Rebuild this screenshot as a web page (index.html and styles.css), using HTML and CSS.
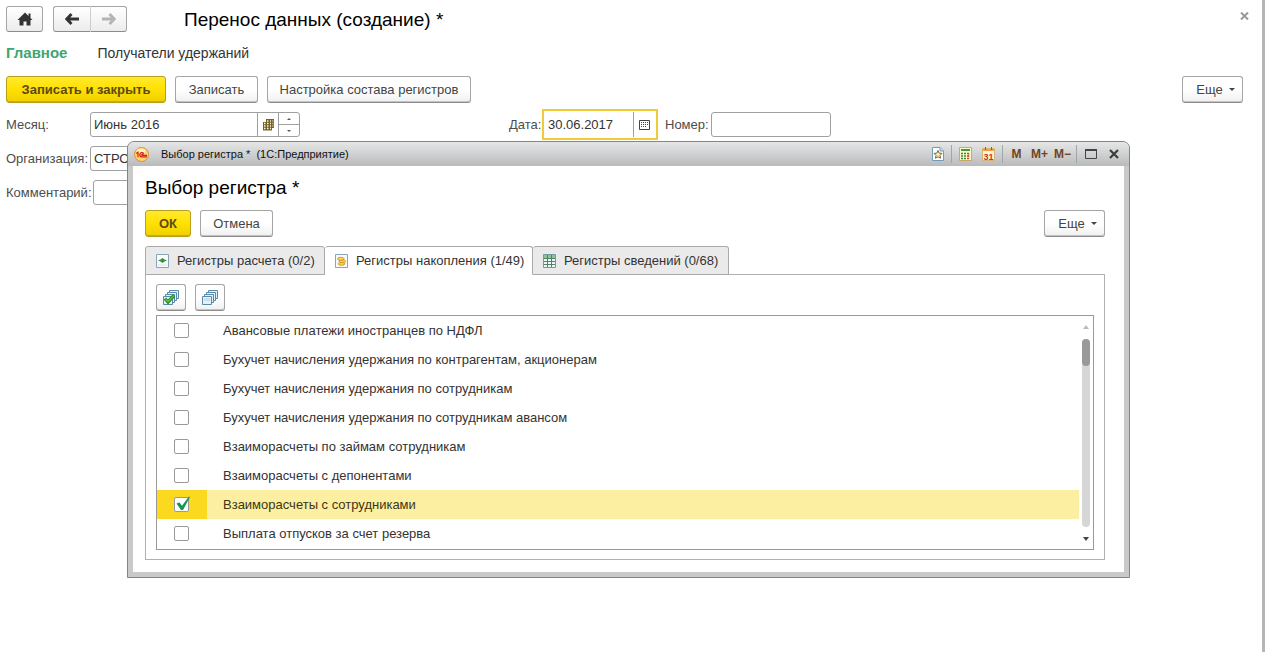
FILE: index.html
```html
<!DOCTYPE html>
<html lang="ru">
<head>
<meta charset="utf-8">
<title>Перенос данных (создание) *</title>
<link rel="stylesheet" href="styles.css">
</head>
<body>
<main class="page">
  <header class="head">
    <button class="btn btn-home" aria-label="Домой"><svg width="16" height="14" viewBox="0 0 16 14"><path d="M8 .5.500 8h2v5.500h4V9.500h3v4h4V8h2L13.500 6V1.500h-2V4z" fill="#333"/></svg></button>
    <div class="nav-pair">
      <button class="btn" aria-label="Назад"><svg width="14" height="12" viewBox="0 0 14 12"><path d="M6.500 1 1.800 6l4.700 5M2 6h12" fill="none" stroke="#333" stroke-width="2.800"/></svg></button>
      <button class="btn" aria-label="Вперед"><svg width="14" height="12" viewBox="0 0 14 12"><path d="m7.500 1 4.700 5-4.700 5M12 6H0" fill="none" stroke="#b4b4b4" stroke-width="2.800"/></svg></button>
    </div>
    <h1 class="title page-title">Перенос данных (создание) *</h1>
    <button class="close" aria-label="Закрыть"><svg width="9" height="8" viewBox="0 0 9 8"><path d="M1 .5 8 7.500M8 .5 1 7.500" stroke="#999" stroke-width="2"/></svg></button>
  </header>
  <nav class="sections">
    <a class="section current" href="#main">Главное</a>
    <a class="section" href="#recipients">Получатели удержаний</a>
  </nav>
  <div class="toolbar">
    <button class="btn btn-primary save-close">Записать и закрыть</button>
    <button class="btn save">Записать</button>
    <button class="btn setup">Настройка состава регистров</button>
    <button class="btn more">Еще<span class="caret"></span></button>
  </div>
  <form class="form">
    <div class="row">
      <label class="label" for="month">Месяц:</label>
      <div class="field month">
        <input class="input" id="month" value="Июнь 2016">
        <button type="button" class="pick" aria-label="Выбрать"><svg width="11" height="12" viewBox="0 0 11 12"><path d="M3 0h8v9H9v2.500H0V3h3z" fill="#75602a"/><path d="M4 2h1.500M7 2h1M9.500 2h.8M1 4.500h1.500M4 4.500h1.500M7 4.500h1M9.500 4.500h.8M1 7h1.500M4 7h1.500M7 7h1M9.500 7h.8M1 9.500h1.500M4 9.500h1.500M7 9.500h1" stroke="#fff8d0" stroke-width="1.300"/></svg></button>
        <div class="spin">
          <button type="button" class="spin-btn" aria-label="Больше"><span class="tri tri-up"></span></button>
          <button type="button" class="spin-btn" aria-label="Меньше"><span class="tri tri-down"></span></button>
        </div>
      </div>
      <label class="label date-label" for="date">Дата:</label>
      <div class="field date">
        <input class="input" id="date" value="30.06.2017">
        <button type="button" class="pick" aria-label="Календарь"><svg width="11" height="10" viewBox="0 0 11 10"><path d="M.5.5h10v9H.5z" fill="#fff" stroke="#444"/><path d="M2 2.500h7M2 4.500h7M2 6.500h5" stroke="#444" stroke-dasharray="1 1"/></svg></button>
      </div>
      <label class="label number-label" for="number">Номер:</label>
      <div class="field number"><input class="input" id="number"></div>
    </div>
    <div class="row">
      <label class="label" for="org">Организация:</label>
      <div class="field wide"><input class="input" id="org" value="СТРОЙ"></div>
    </div>
    <div class="row">
      <label class="label label-comment" for="comment">Комментарий:</label>
      <div class="field wide"><input class="input" id="comment"></div>
    </div>
  </form>
</main>

<section class="dialog" role="dialog" aria-labelledby="dialog-title">
  <div class="titlebar">
    <svg class="logo" width="15" height="15" viewBox="0 0 15 15"><circle cx="7.500" cy="7.500" r="7" fill="#ffd66b" stroke="#e08a3c"/><ellipse cx="7" cy="4" rx="4.500" ry="2.500" fill="#fff1b8"/><path d="M2.200 6.500 4 5.200v5M9.800 6.600C8.600 4.800 5.800 5.300 5.800 7.700c0 1.500 1.100 2.200 2.400 2.200H13M9.300 7.600c-.8-.7-1.700-.3-1.600.3.100.4.400.5.800.5H13" fill="none" stroke="#d3201f" stroke-width="1.200"/></svg>
    <span class="caption">Выбор регистра *&nbsp; (1С:Предприятие)</span>
    <button class="tool" aria-label="Избранное"><svg width="12" height="14" viewBox="0 0 12 14"><path d="M.5.5H8L11.500 4v9.500H.5z" fill="#fff" stroke="#6f9cb8"/><path d="M8 .5V4h3.500" fill="#cfe2ee" stroke="#6f9cb8"/><path d="m6 3.500 1.200 2.600 2.800.3-2 2 .6 2.800L6 9.800l-2.600 1.400.6-2.800-2-2 2.800-.3z" fill="#ffe9a0" stroke="#655a45" stroke-width=".9"/></svg></button>
    <span class="sep"></span>
    <button class="tool" aria-label="Калькулятор"><svg width="13" height="14" viewBox="0 0 13 14"><path d="M.5.5h12v13H.5z" fill="#fff6c9" stroke="#c9a868"/><path d="M2 2h9v2H2z" fill="#3e9a46"/><path d="M2 6.500h9M2 9h9M2 11.500h9" stroke="#3b8b45" stroke-width="1.500" stroke-dasharray="2 1"/><path d="M9.500 6v6" stroke="#c54d32" stroke-width="1.500" stroke-dasharray="1.500 1"/></svg></button>
    <button class="tool" aria-label="Календарь"><svg width="13" height="14" viewBox="0 0 13 14"><path d="M.5 1.500h12v12H.5z" fill="#fff4cf" stroke="#dbb27a"/><path d="M1 2h11v2H1z" fill="#f0a04c"/><path d="M3.500 0v3M9.500 0v3" stroke="#a9562a"/><text x="6.500" y="12.500" text-anchor="middle" class="day">31</text></svg></button>
    <span class="sep"></span>
    <button class="tool memory">M</button>
    <button class="tool memory">M+</button>
    <button class="tool memory">M−</button>
    <span class="sep"></span>
    <button class="tool" aria-label="Развернуть"><svg width="12" height="10" viewBox="0 0 12 10"><path d="M.5.5h11v9H.5z" fill="none" stroke="#444"/><path d="M0 1h12" stroke="#444" stroke-width="2"/></svg></button>
    <button class="tool" aria-label="Закрыть"><svg width="10" height="10" viewBox="0 0 10 10"><path d="m1 1 8 8M9 1 1 9" stroke="#3c3c3c" stroke-width="2.200"/></svg></button>
  </div>
  <div class="dialog-body">
    <h2 class="title" id="dialog-title">Выбор регистра *</h2>
    <div class="toolbar dialog-tools">
      <button class="btn btn-primary ok">ОК</button>
      <button class="btn cancel">Отмена</button>
      <button class="btn more">Еще<span class="caret"></span></button>
    </div>
    <div class="tabs" role="tablist">
      <button class="tab tab-calc" role="tab" aria-selected="false"><svg width="13" height="14" viewBox="0 0 13 14"><path d="M.5.5h12v13H.5z" fill="#f6fafc" stroke="#8aa5b8"/><path d="M2 6.500 4.500 5.500 6.500 4l2 1.500 2.500 1L8.500 7.500 6.500 9l-2-1.500z" fill="#3f8f35"/><path d="M2 11h9" stroke="#dbe8ef"/></svg>Регистры расчета (0/2)</button>
      <button class="tab tab-accum active" role="tab" aria-selected="true"><svg width="13" height="14" viewBox="0 0 13 14"><path d="M.5.5h12v13H.5z" fill="#f6fafc" stroke="#8aa5b8"/><g fill="#ffd34e" stroke="#c58b17" stroke-width=".8"><ellipse cx="6.500" cy="9.800" rx="3.300" ry="1.500"/><ellipse cx="7.300" cy="7.300" rx="3.300" ry="1.500"/><ellipse cx="5.800" cy="4.800" rx="3.300" ry="1.500"/></g></svg>Регистры накопления (1/49)</button>
      <button class="tab tab-info" role="tab" aria-selected="false"><svg width="13" height="14" viewBox="0 0 13 14"><path d="M.5.5h12v13H.5z" fill="#eef6f4" stroke="#739b9b"/><path d="M1 1h11v3H1z" fill="#8fc29a"/><path d="M4.500 1v12M8.500 1v12M1 4.500h11M1 7.500h11M1 10.500h11" stroke="#4f8468"/></svg>Регистры сведений (0/68)</button>
    </div>
    <div class="panel" role="tabpanel">
      <div class="marks">
        <button class="btn btn-icon" aria-label="Отметить все"><svg width="16" height="15" viewBox="0 0 16 15"><g fill="#e5f1f9" stroke="#5b8aa8"><path d="M6.500.5h9v8h-9z"/><path d="M4.500 2.500h9v8h-9z"/><path d="M2.500 4.500h9v8h-9z"/><path d="M.5 6.500h9v8h-9z"/></g><path d="m2 8.500 3 3.500 6-6.500" fill="none" stroke="#2f8a26" stroke-width="3.400"/><path d="m2.500 8.800 2.500 2.700L10.500 6" fill="none" stroke="#58bf3c" stroke-width="1.600"/></svg></button>
        <button class="btn btn-icon" aria-label="Снять отметки"><svg width="16" height="15" viewBox="0 0 16 15"><g fill="#e5f1f9" stroke="#5b8aa8"><path d="M6.500.5h9v8h-9z"/><path d="M4.500 2.500h9v8h-9z"/><path d="M2.500 4.500h9v8h-9z"/><path d="M.5 6.500h9v8h-9z"/></g><path d="M2 8h6v3H2z" fill="#c5e0f0"/></svg></button>
      </div>
      <div class="list">
        <ul class="items">
          <li><label class="item"><span class="mark"><input type="checkbox" class="check"></span>Авансовые платежи иностранцев по НДФЛ</label></li>
          <li><label class="item"><span class="mark"><input type="checkbox" class="check"></span>Бухучет начисления удержания по контрагентам, акционерам</label></li>
          <li><label class="item"><span class="mark"><input type="checkbox" class="check"></span>Бухучет начисления удержания по сотрудникам</label></li>
          <li><label class="item"><span class="mark"><input type="checkbox" class="check"></span>Бухучет начисления удержания по сотрудникам авансом</label></li>
          <li><label class="item"><span class="mark"><input type="checkbox" class="check"></span>Взаиморасчеты по займам сотрудникам</label></li>
          <li><label class="item"><span class="mark"><input type="checkbox" class="check"></span>Взаиморасчеты с депонентами</label></li>
          <li><label class="item selected"><span class="mark"><input type="checkbox" class="check" checked><svg class="tick" width="16" height="15" viewBox="0 0 16 15"><path d="M1.500 7.500 4.500 6.500 7 9.800 14 .5l1 .5L8 14H6z" fill="#129653"/></svg></span>Взаиморасчеты с сотрудниками</label></li>
          <li><label class="item"><span class="mark"><input type="checkbox" class="check"></span>Выплата отпусков за счет резерва</label></li>
        </ul>
        <div class="scroll">
          <span class="arrow arrow-up"></span>
          <div class="track"><div class="thumb"></div></div>
          <span class="arrow arrow-down"></span>
        </div>
      </div>
    </div>
  </div>
</section>
</body>
</html>
```
FILE: styles.css
```css
* { box-sizing: border-box; }
body {
  margin: 0;
  position: relative;
  font: 13px/16px "Liberation Sans", Arial, sans-serif;
  color: #333;
  background: #fff;
}
button, input { font: inherit; color: inherit; margin: 0; }
button { cursor: pointer; padding: 0; }
svg { display: block; flex: none; }

.page {
  min-height: 100vh;
  padding: 6px 19px 0 6px;
  border-right: 3px solid #b5b5b5;
}
.title { margin: 0; padding-top: 2px; font-size: 19px; line-height: 22px; font-weight: 400; color: #000; }
.head { display: flex; align-items: center; height: 26px; }
.page-title { margin-left: 57px; flex: 1; }
.btn {
  display: flex;
  align-items: center;
  justify-content: center;
  height: 27px;
  border: 1px solid #a6a6a6;
  border-bottom-color: #8c8c8c;
  border-radius: 3px;
  box-shadow: inset 0 -1px #c4c4c4;
  background: linear-gradient(#fff 50%, #f0f0f0);
  color: #444;
  white-space: nowrap;
}
.head .btn { width: 37px; height: 26px; box-shadow: none; background: linear-gradient(#fff, #ececec); }
.nav-pair { display: flex; margin-left: 10px; }
.nav-pair .btn:first-child { width: 38px; border-right-color: #ccc; border-radius: 3px 0 0 3px; }
.nav-pair .btn:last-child { border-left: 0; width: 36px; border-radius: 0 3px 3px 0; }
.btn-primary {
  background: linear-gradient(#ffe92e, #ffe100 50%, #efcf00);
  border-color: #b99f1e;
  box-shadow: inset 0 -1px #c9ac10;
  color: #5c4a12;
  font-weight: 700;
}
.close { align-self: flex-start; border: 0; background: none; padding: 6px 0 0; margin-right: -6px; }

.sections { display: flex; gap: 30px; padding-top: 12px; height: 44px; font-size: 14px; line-height: 18px; }
.section { color: #333; text-decoration: none; }
.section.current { color: #3fa66f; font-size: 15px; font-weight: 700; }

.toolbar { display: flex; gap: 9px; }
.save-close { width: 160px; }
.save { width: 83px; }
.setup { width: 204px; }
.more { margin-left: auto; width: 61px; gap: 6px; padding-left: 6px; }
.caret { border: 3px solid transparent; border-top-color: #444; border-bottom: 0; }

.form { padding-top: 9px; display: flex; flex-direction: column; gap: 9px; }
.row { display: flex; align-items: center; height: 25px; }
.label { color: #4d4d4d; min-width: 84px; white-space: nowrap; }
.label-comment { min-width: 87px; }
.field {
  display: flex;
  height: 25px;
  border: 1px solid #a0a0a0;
  border-radius: 3px;
  background: #fff;
}
.input { flex: 1; min-width: 0; border: 0; outline: 0; padding: 0 3px; background: none; }
.month { width: 210px; }
.pick {
  display: flex; align-items: center; justify-content: center;
  width: 22px; border: 0; border-left: 1px solid #a0a0a0; background: none;
}
.month .pick { width: 21px; }
.spin { width: 21px; display: flex; flex-direction: column; border-left: 1px solid #a0a0a0; }
.spin-btn { flex: 1; display: flex; align-items: center; justify-content: center; border: 0; background: none; }
.spin-btn + .spin-btn { border-top: 1px solid #a0a0a0; }
.tri { border: 2px solid transparent; }
.tri-up { border-bottom-color: #555; border-top: 0; }
.tri-down { border-top-color: #555; border-bottom: 0; }
.date-label { min-width: 33px; margin-left: 209px; }
.date { width: 116px; height: 31px; padding: 1px; border: 2px solid #f0cb35; border-radius: 0; }
.number-label { min-width: 46px; margin-left: 7px; }
.number { width: 120px; }
.wide { width: 210px; }

.dialog {
  position: absolute;
  top: 141px;
  left: 127px;
  right: 135px;
  padding: 0 5px 5px;
  border: 1px solid #858585;
  border-radius: 7px 7px 0 0;
  background: #c9c9c9;
}
.titlebar {
  display: flex;
  align-items: center;
  height: 24px;
  margin: 0 -5px;
  padding: 0 4px 0 6px;
  border-radius: 6px 6px 0 0;
  background: linear-gradient(#e6e6e6, #d4d5d6 40%, #b9babb);
  font-size: 11px;
  color: #111;
}
.caption { margin-left: 12px; flex: 1; white-space: pre; }
.tool { border: 0; background: none; display: flex; align-items: center; justify-content: center; width: 23px; height: 20px; }
.memory { font-size: 12px; font-weight: 700; color: #704421; }
.day { font: 700 9px "Liberation Sans", Arial, sans-serif; fill: #c03820; }
.sep { width: 1px; height: 18px; margin: 0 2px; background: #a0a5a8; }

.dialog-body { background: #fff; padding: 9px 19px 12px 12px; }
.dialog-tools { margin: 11px 0 9px; }
.ok { width: 46px; }
.cancel { width: 73px; }
.tabs { display: flex; height: 29px; margin-bottom: -1px; position: relative; }
.tab {
  display: flex;
  align-items: center;
  gap: 8px;
  padding: 0 10px;
  border: 1px solid #aaa;
  border-radius: 3px 3px 0 0;
  background: #eaeaea;
  white-space: nowrap;
}
.tab + .tab { border-left: 0; }
.tab-calc { width: 180px; }
.tab-accum { width: 208px; }
.tab-info { width: 196px; }
.tab.active { background: #fff; border-bottom-color: #fff; }
.panel { border: 1px solid #b0b0b0; padding: 9px 10px; }
.marks { display: flex; gap: 9px; margin-bottom: 4px; }
.btn-icon { width: 30px; }
.list { display: flex; border: 1px solid #999; height: 235px; overflow: hidden; }
.items { flex: 1; list-style: none; margin: 0; padding: 0; }
.item { display: flex; align-items: center; height: 29px; }
.mark {
  position: relative;
  display: flex; align-items: center; justify-content: center;
  align-self: stretch;
  width: 50px; margin-right: 16px; padding-right: 2px;
}
.check {
  appearance: none;
  width: 15px; height: 15px;
  border: 1px solid #999;
  border-radius: 2px;
  background: #fff;
}
.tick { position: absolute; left: 18px; top: 6px; pointer-events: none; }
.selected { background: #fcefa1; color: #3d3615; }
.selected .mark { background: #fad91f; }
.scroll { width: 14px; display: flex; flex-direction: column; align-items: center; padding: 9px 0 8px; }
.arrow { border: 3px solid transparent; }
.arrow-up { border-bottom: 4px solid #bbb; border-top: 0; }
.arrow-down { border-top: 4px solid #444; border-bottom: 0; }
.track { flex: 1; width: 8px; margin: 10px 0; border-radius: 4px; background: #d6d6d6; }
.thumb { height: 27px; border-radius: 4px; background: #999; }
```
